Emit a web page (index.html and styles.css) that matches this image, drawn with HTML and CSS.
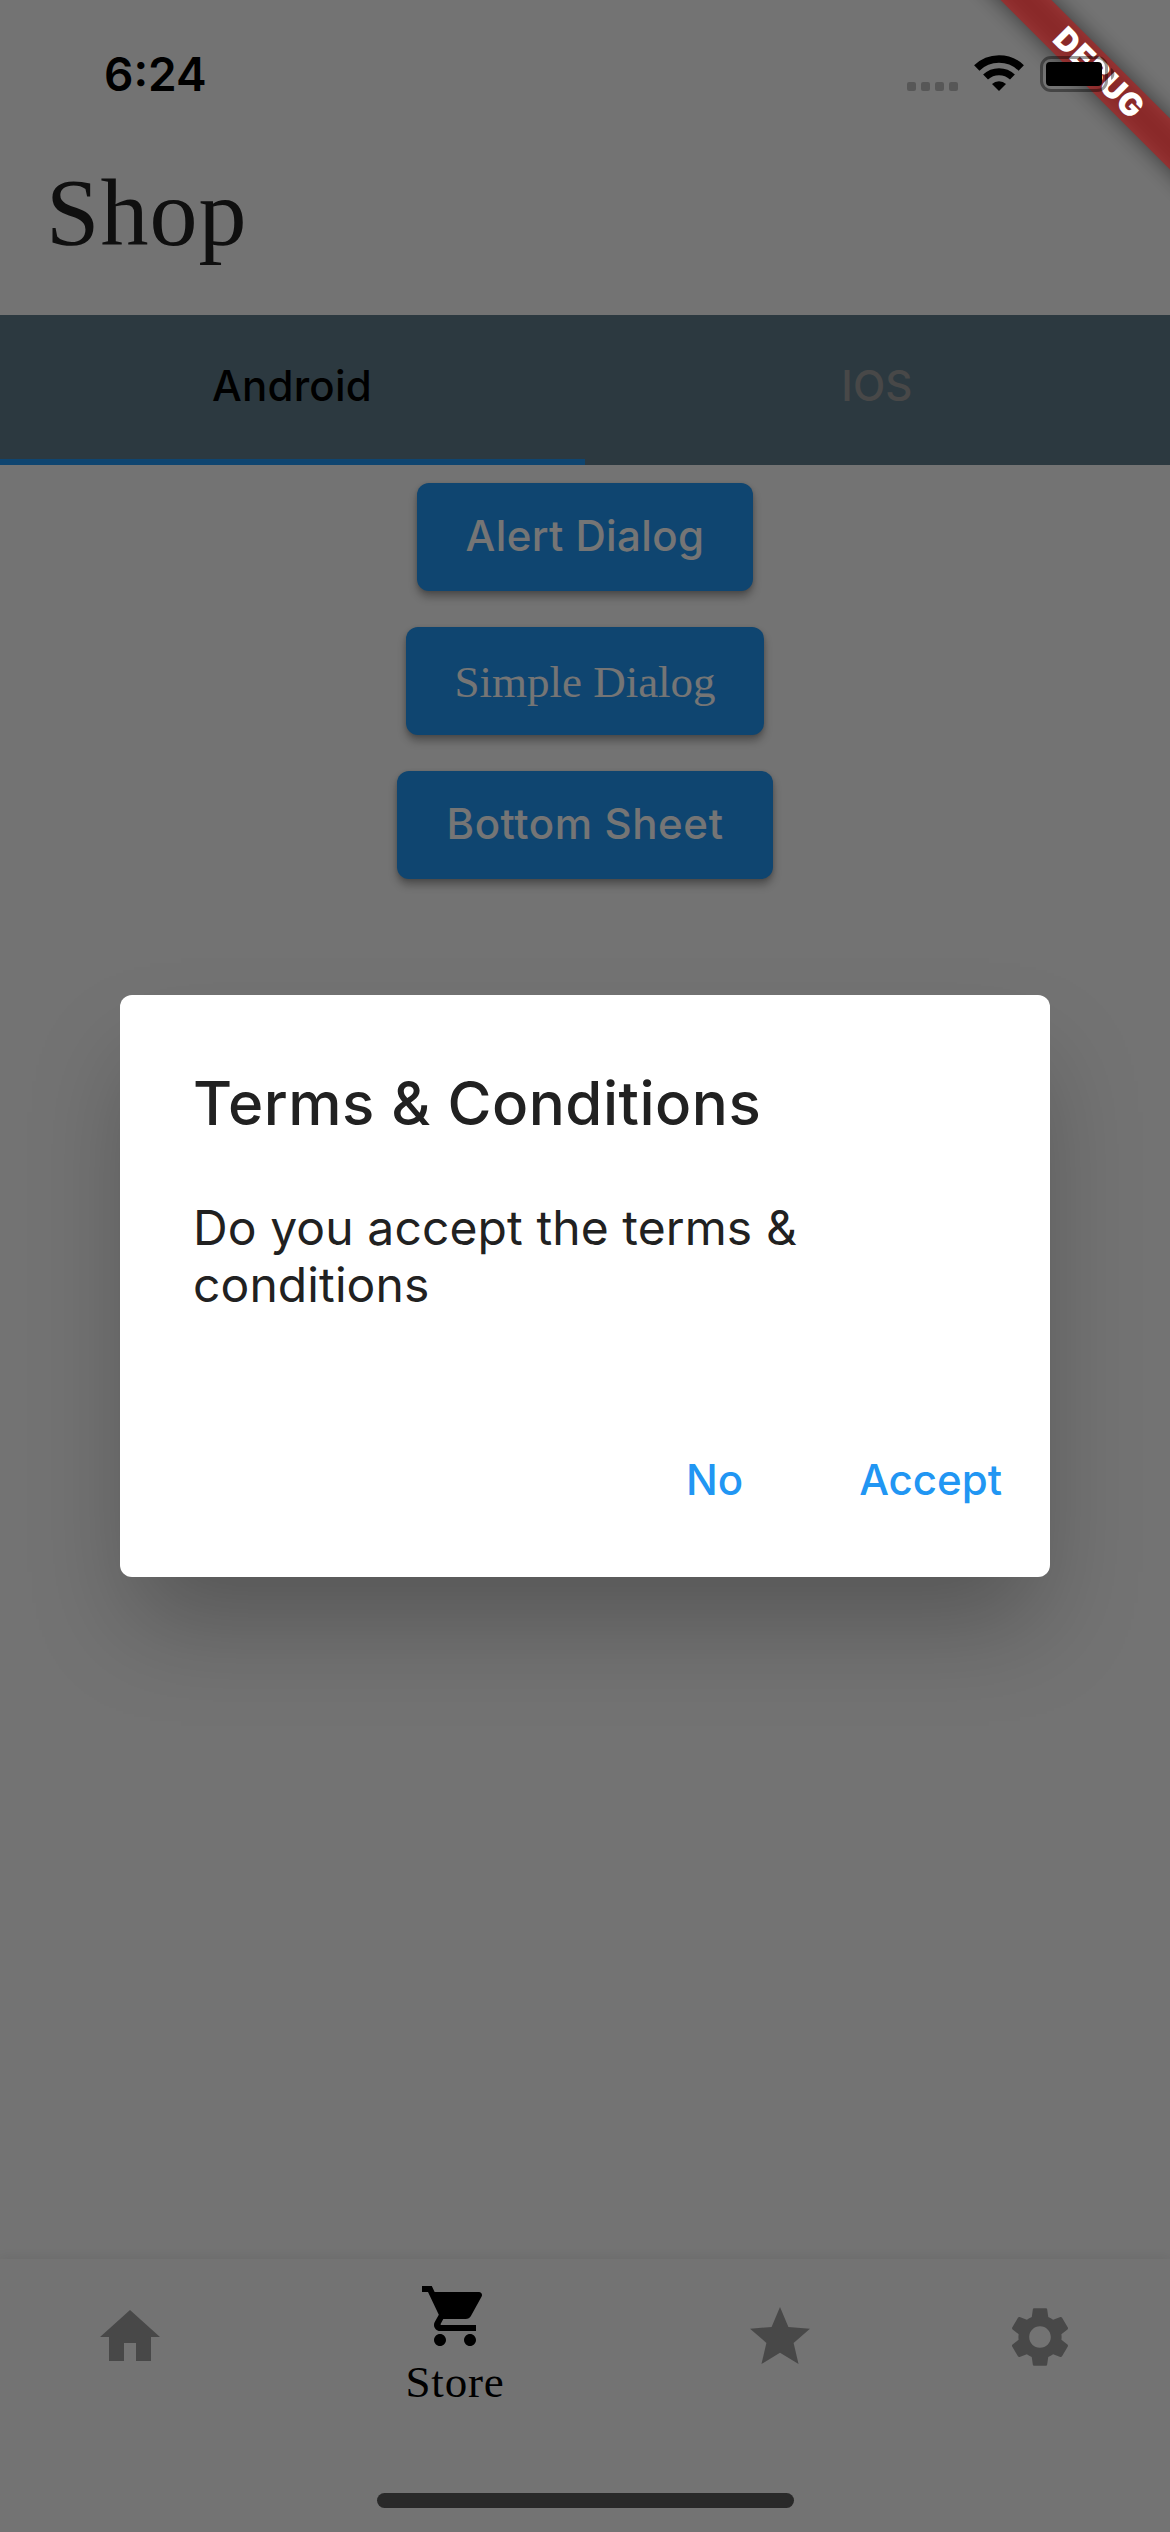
FILE: index.html
```html
<!DOCTYPE html>
<html lang="en">
<head>
<meta charset="utf-8">
<title>Shop</title>
<link rel="stylesheet" href="styles.css">
</head>
<body>
<div class="screen">
  <div class="app">
    <header class="header"><h1 class="page-title">Shop</h1></header>
    <nav class="tabs">
      <div class="tab tab-active">Android</div>
      <div class="tab">IOS</div>
    </nav>
    <main class="content">
      <button class="button button-alert">Alert Dialog</button>
      <button class="button button-simple">Simple Dialog</button>
      <button class="button button-sheet">Bottom Sheet</button>
    </main>
    <nav class="bottom-nav">
      <div class="nav-item">
        <svg class="icon" viewBox="0 0 24 24"><path d="M10 20v-6h4v6h5v-8h3L12 3 2 12h3v8z"/></svg>
      </div>
      <div class="nav-item nav-item-active">
        <svg class="icon" viewBox="0 0 24 24"><path d="M7 18c-1.1 0-1.99.9-1.99 2S5.9 22 7 22s2-.9 2-2-.9-2-2-2zM1 2v2h2l3.6 7.59-1.35 2.45c-.16.28-.25.61-.25.96 0 1.1.9 2 2 2h12v-2H7.42c-.14 0-.25-.11-.25-.25l.03-.12.9-1.63h7.45c.75 0 1.41-.41 1.75-1.03l3.58-6.49c.08-.14.12-.31.12-.48 0-.55-.45-1-1-1H5.21l-.94-2H1zm16 16c-1.1 0-1.99.9-1.99 2s.89 2 1.99 2 2-.9 2-2-.9-2-2-2z"/></svg>
        <span class="nav-label">Store</span>
      </div>
      <div class="nav-item">
        <svg class="icon" viewBox="0 0 24 24"><path d="M12 17.27L18.18 21l-1.64-7.03L22 9.24l-7.19-.61L12 2 9.19 8.63 2 9.24l5.46 4.73L5.82 21z"/></svg>
      </div>
      <div class="nav-item">
        <svg class="icon" viewBox="0 0 24 24"><path d="M19.14 12.94c.04-.3.06-.61.06-.94 0-.32-.02-.64-.07-.94l2.03-1.58c.18-.14.23-.41.12-.61l-1.92-3.32c-.12-.22-.37-.29-.59-.22l-2.39.96c-.5-.38-1.03-.7-1.62-.94l-.36-2.54c-.04-.24-.24-.41-.48-.41h-3.84c-.24 0-.43.17-.47.41l-.36 2.54c-.59.24-1.13.57-1.62.94l-2.39-.96c-.22-.08-.47 0-.59.22L2.74 8.87c-.12.21-.08.47.12.61l2.03 1.58c-.05.3-.09.63-.09.94s.02.64.07.94l-2.03 1.58c-.18.14-.23.41-.12.61l1.92 3.32c.12.22.37.29.59.22l2.39-.96c.5.38 1.03.7 1.62.94l.36 2.54c.05.24.24.41.48.41h3.84c.24 0 .44-.17.47-.41l.36-2.54c.59-.24 1.13-.56 1.62-.94l2.39.96c.22.08.47 0 .59-.22l1.92-3.32c.12-.22.07-.47-.12-.61l-2.01-1.58zM12 15.6c-1.98 0-3.6-1.62-3.6-3.6s1.62-3.6 3.6-3.6 3.6 1.62 3.6 3.6-1.62 3.6-3.6 3.6z"/></svg>
      </div>
    </nav>
  </div>

  <div class="scrim">
    <section class="dialog">
      <h2 class="dialog-title">Terms &amp; Conditions</h2>
      <p class="dialog-body">Do you accept the terms &amp;<br>conditions</p>
      <div class="dialog-actions">
        <span>No</span>
        <span>Accept</span>
      </div>
    </section>
  </div>

  <div class="banner"><div class="banner-shadow"></div><div class="banner-band">DEBUG</div></div>

  <div class="status-bar">
    <span class="time">6:24</span>
    <div class="status-icons">
      <div class="signal"><i></i><i></i><i></i><i></i></div>
      <svg class="wifi" viewBox="0 0 144 108"><path d="M5.3 39A96 96 0 0 1 138.7 39" stroke-width="23"/><path d="M31.7 66.3A58 58 0 0 1 112.3 66.3" stroke-width="21"/><path class="wifi-dot" d="M51 87A30 30 0 0 1 93 87L72 108z"/></svg>
      <svg class="battery" viewBox="0 0 76 36"><rect class="battery-shell" x="1.5" y="1.5" width="65" height="33" rx="9.5"/><rect x="6" y="6" width="56" height="24" rx="4"/><path class="battery-tip" d="M71 12a7 7 0 0 1 0 12z"/></svg>
    </div>
  </div>
  <div class="home-indicator"></div>
</div>
</body>
</html>
```
FILE: styles.css
```css
* { box-sizing: border-box; }

body {
  margin: 0;
  font-family: Inter, "Liberation Sans", sans-serif;
}

.screen {
  position: relative;
  width: 1170px;
  height: 2532px;
  overflow: hidden;
}

.app {
  display: flex;
  flex-direction: column;
  height: 100%;
  background: #fafafa;
}

.header {
  height: 315px;
  padding: 163px 0 0 46px;
}

.page-title {
  margin: 0;
  font: 400 96px/100px "Liberation Serif", serif;
  letter-spacing: 1px;
  color: #212121;
}

.tabs {
  display: flex;
  height: 150px;
  background: #607d8b;
}

.tab {
  flex: 1;
  display: flex;
  align-items: center;
  justify-content: center;
  padding: 0 1px 3px 0;
  border-bottom: 6px solid transparent;
  font-size: 42px;
  font-weight: 470;
  letter-spacing: .2px;
  color: #9e9e9e;
}

.tab-active {
  border-color: #2196f3;
  color: #000;
}

.content {
  flex: 1;
  display: flex;
  flex-direction: column;
  align-items: center;
  gap: 36px;
  padding-top: 18px;
}

.button {
  height: 108px;
  padding: 0 0 3px;
  border: 0;
  border-radius: 12px;
  background: #2196f3;
  box-shadow: 0 6px 9px rgba(0, 0, 0, .3), 0 1px 4px rgba(0, 0, 0, .15);
  font: 500 42px Inter, "Liberation Sans", sans-serif;
  letter-spacing: .4px;
  color: #fff;
  white-space: nowrap;
}

.button-alert { width: 336px; }

.button-simple {
  width: 358px;
  padding: 2px 0 0;
  font: 400 45px "Liberation Serif", serif;
  letter-spacing: 0;
}

.button-sheet {
  width: 376px;
  letter-spacing: .6px;
}

.bottom-nav {
  display: flex;
  height: 273px;
  padding-top: 21px;
  background: #fafafa;
  box-shadow: 0 -2px 10px rgba(0, 0, 0, .07);
}

.nav-item {
  flex: 1;
  display: flex;
  flex-direction: column;
  align-items: center;
  padding-top: 21px;
  color: #9e9e9e;
}

.nav-item-active {
  flex: 1.5;
  padding-top: 0;
  color: #000;
}

.icon {
  width: 72px;
  height: 72px;
  fill: currentColor;
}

.nav-label {
  margin-top: 8px;
  font: 400 45px/45px "Liberation Serif", serif;
  letter-spacing: .8px;
}

.scrim {
  position: absolute;
  inset: 0;
  display: flex;
  align-items: center;
  justify-content: center;
  padding: 141px 0 102px;
  background: rgba(0, 0, 0, .54);
}

.dialog {
  width: 930px;
  height: 582px;
  padding: 78px 48px 0 73px;
  border-radius: 12px;
  background: #fff;
  box-shadow: 0 56px 94px -14px rgba(0, 0, 0, .26);
  color: #212121;
}

.dialog-title {
  margin: 0 0 66px;
  font-size: 60px;
  font-weight: 470;
  letter-spacing: .5px;
  line-height: 60px;
}

.dialog-body {
  margin: 0;
  font-size: 48px;
  letter-spacing: .1px;
  line-height: 57px;
  white-space: nowrap;
}

.dialog-actions {
  display: flex;
  justify-content: flex-end;
  gap: 116px;
  margin-top: 137px;
  font-size: 42px;
  font-weight: 500;
  line-height: 60px;
  color: #2196f3;
}

.banner {
  position: absolute;
  left: 898px;
  top: 54px;
  width: 400px;
  height: 36px;
  transform: rotate(45deg);
}

.banner-shadow {
  position: absolute;
  inset: 0;
  background: rgba(0, 0, 0, .5);
  filter: blur(11px);
}

.banner-band {
  position: relative;
  height: 36px;
  padding-left: 3px;
  background: rgba(183, 28, 28, .627);
  font-size: 31.5px;
  font-weight: 900;
  letter-spacing: .7px;
  line-height: 35px;
  text-align: center;
  color: #fff;
}

.status-bar {
  position: absolute;
  inset: 0 0 auto;
  display: flex;
  justify-content: space-between;
  height: 141px;
  padding: 0 54px 0 104px;
}

.time {
  padding-top: 44px;
  font-size: 46px;
  font-weight: 600;
  line-height: 60px;
}

.status-icons {
  display: flex;
  align-items: flex-start;
  padding-top: 55px;
}

.signal {
  display: flex;
  gap: 5px;
  margin: 27px 17px 0 0;
}

.signal i {
  width: 9px;
  height: 9px;
  border-radius: 2px;
  background: rgba(0, 0, 0, .24);
}

.wifi {
  width: 48px;
  height: 36px;
  margin-right: 17px;
  overflow: visible;
  fill: none;
  stroke: #000;
}

.wifi-dot {
  fill: #000;
  stroke: none;
}

.battery {
  width: 76px;
  height: 36px;
  margin-top: 1px;
}

.battery-shell {
  fill: none;
  stroke: rgba(0, 0, 0, .4);
  stroke-width: 3;
}

.battery-tip { fill: rgba(0, 0, 0, .4); }

.home-indicator {
  position: absolute;
  left: 377px;
  bottom: 24px;
  width: 417px;
  height: 15px;
  border-radius: 8px;
  background: #292929;
}
```
